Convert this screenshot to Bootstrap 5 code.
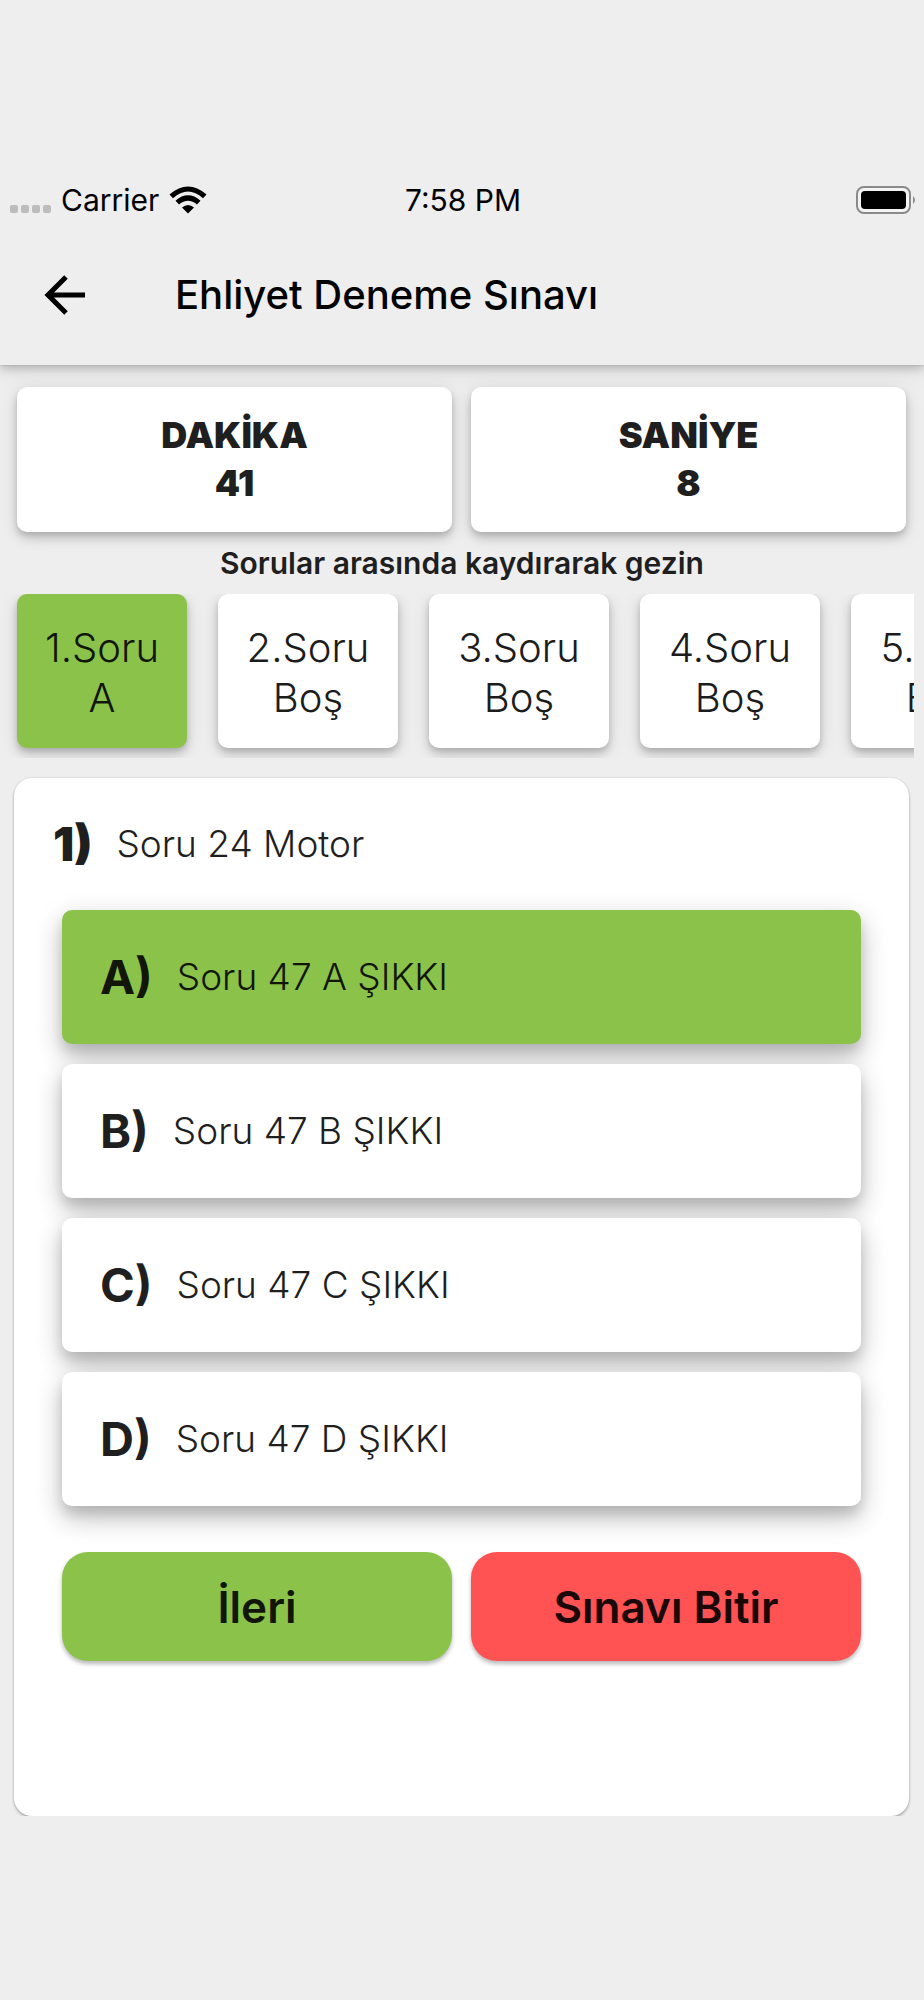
<!DOCTYPE html>
<html lang="tr">
<head>
<meta charset="utf-8">
<meta name="viewport" content="width=device-width, initial-scale=1">
<title>Ehliyet Deneme Sınavı</title>
<link href="https://cdn.jsdelivr.net/npm/bootstrap@5.3.0/dist/css/bootstrap.min.css" rel="stylesheet">
<style>
  body { background: #eee; color: #1f1f1f; font-family: Inter, "Liberation Sans", sans-serif; }
  .top-area { padding-top: 175px; background: #eee; box-shadow: 0 4px 8px rgba(0,0,0,.16), 0 5px 20px rgba(0,0,0,.1), 0 0 2px rgba(0,0,0,.2); }
  .status-bar { height: 50px; padding: 0 8px 0 10px; color: #000; font-size: 30px; line-height: 50px; }
  .signal { gap: 3px; padding-top: 18px; margin-right: 10px; }
  .signal span { width: 8px; height: 8px; border-radius: 2px; background: #bcbcbc; }
  .wifi { margin-left: 10px; }
  .app-bar { height: 140px; padding: 0 41px; gap: 86px; color: #000; }
  .app-bar h1 { font-size: 40px; line-height: 52px; font-weight: 500; }
  .back { line-height: 0; }
  .timers { padding: 22px 18px 0 17px; gap: 19px; }
  .tile { background: #fff; border-radius: 10px; box-shadow: 0 6px 10px rgba(0,0,0,.12), 0 4px 18px rgba(0,0,0,.12), 0 3px 5px rgba(0,0,0,.1); }
  .timer { padding: 24px 0 25px; font-size: 36px; line-height: 48px; font-weight: 900; }
  .hint { padding-top: 3px; font-size: 30px; line-height: 56px; margin-bottom: 3px; font-weight: 600; }
  .strip { margin: 0 10px 20px 0; padding: 0 0 10px 17px; gap: 31px; }
  .strip .tile { width: 180px; height: 154px; border: 0; color: #1c1c1c; font-size: 40px; line-height: 50px; font-weight: 300; }
  .strip .tile.picked { width: 170px; }
  .picked { background: #8bc34a; color: #121608 !important; }
  .quiz { margin: 0 15px 0 14px; padding: 0 48px 155px; background: #fff; border-radius: 18px; box-shadow: 0 2px 3px rgba(0,0,0,.26), 0 0 2px rgba(0,0,0,.16); }
  .question { height: 132px; margin-left: -9px; gap: 24px; }
  .strong-mark { font-size: 47px; line-height: 58px; font-weight: 700; }
  .question .strong-mark { font-weight: 900; }
  .phrase { font-size: 37px; line-height: 48px; font-weight: 300; }
  .choices { gap: 20px; }
  .choice { height: 134px; padding: 0 38px; gap: 24px; border: 0; border-radius: 10px; background: #fff; color: #1f1f1f; box-shadow: 0 14px 26px rgba(0,0,0,.16), 0 6px 32px rgba(0,0,0,.1), 0 8px 12px rgba(0,0,0,.12); }
  .choice.picked { background: #8bc34a; }
  .actions { gap: 19px; padding-top: 46px; }
  .action { height: 109px; border: 0; border-radius: 26px; font-size: 44px; line-height: 56px; font-weight: 600; box-shadow: 0 3px 4px rgba(0,0,0,.28); }
  .finish { background: #ff5252; color: #1a0808; }
</style>
</head>
<body>
<header class="top-area position-relative">
  <div class="status-bar row g-0 align-items-center">
    <div class="col d-flex align-items-center">
      <div class="signal d-flex" aria-hidden="true"><span></span><span></span><span></span><span></span></div>
      <span>Carrier</span>
      <svg class="wifi" width="38" height="28" viewBox="0 0 38 28" aria-hidden="true">
        <path d="M.500 8.500Q19-7.500 37.500 8.500L34 12.200Q19-1 4 12.200Z"/>
        <path d="M6.500 14.700Q19 4 31.500 14.700L28 18.500Q19 11 10 18.500Z"/>
        <path d="M13 21.500Q19 16.500 25 21.500L19 27.500Z"/>
      </svg>
    </div>
    <div class="col-auto">7:58 PM</div>
    <div class="col d-flex justify-content-end">
      <svg width="60" height="28" viewBox="0 0 60 28" aria-hidden="true">
        <rect x="1" y="1" width="53" height="26" rx="7" fill="#f4f4f4" stroke="#8a8a8a" stroke-width="2"/>
        <rect x="5" y="5" width="45" height="18" rx="4"/>
        <path d="M57 10Q61 14 57 18Z" fill="#8a8a8a"/>
      </svg>
    </div>
  </div>
  <div class="app-bar d-flex align-items-center">
    <button type="button" class="back btn p-0 border-0" aria-label="Geri">
      <svg width="48" height="48" viewBox="0 0 48 48" fill="none" stroke="#000" stroke-width="5"><path d="M44 24H7M25 6L7 24L25 42"/></svg>
    </button>
    <h1 class="m-0 text-nowrap">Ehliyet Deneme Sınavı</h1>
  </div>
</header>
<main>
  <section class="timers d-flex text-center">
    <div class="tile timer flex-fill w-50"><div>DAKİKA</div><div>41</div></div>
    <div class="tile timer flex-fill w-50"><div>SANİYE</div><div>8</div></div>
  </section>
  <p class="hint text-center">Sorular arasında kaydırarak gezin</p>
  <nav class="strip d-flex overflow-hidden" aria-label="Sorular">
    <button type="button" class="tile picked flex-shrink-0 px-0 pt-1 pb-0">1.Soru<br>A</button>
    <button type="button" class="tile flex-shrink-0 px-0 pt-1 pb-0">2.Soru<br>Boş</button>
    <button type="button" class="tile flex-shrink-0 px-0 pt-1 pb-0">3.Soru<br>Boş</button>
    <button type="button" class="tile flex-shrink-0 px-0 pt-1 pb-0">4.Soru<br>Boş</button>
    <button type="button" class="tile flex-shrink-0 px-0 pt-1 pb-0">5.Soru<br>Boş</button>
  </nav>
  <section class="quiz">
    <div class="question d-flex align-items-center"><span class="strong-mark">1)</span><span class="phrase">Soru 24 Motor</span></div>
    <div class="choices d-flex flex-column">
      <button type="button" class="choice picked d-flex align-items-center"><span class="strong-mark">A)</span><span class="phrase">Soru 47 A ŞIKKI</span></button>
      <button type="button" class="choice d-flex align-items-center"><span class="strong-mark">B)</span><span class="phrase">Soru 47 B ŞIKKI</span></button>
      <button type="button" class="choice d-flex align-items-center"><span class="strong-mark">C)</span><span class="phrase">Soru 47 C ŞIKKI</span></button>
      <button type="button" class="choice d-flex align-items-center"><span class="strong-mark">D)</span><span class="phrase">Soru 47 D ŞIKKI</span></button>
    </div>
    <div class="actions d-flex">
      <button type="button" class="action picked w-50">İleri</button>
      <button type="button" class="action finish w-50">Sınavı Bitir</button>
    </div>
  </section>
</main>
<script src="https://cdn.jsdelivr.net/npm/bootstrap@5.3.0/dist/js/bootstrap.bundle.min.js"></script>
</body>
</html>
